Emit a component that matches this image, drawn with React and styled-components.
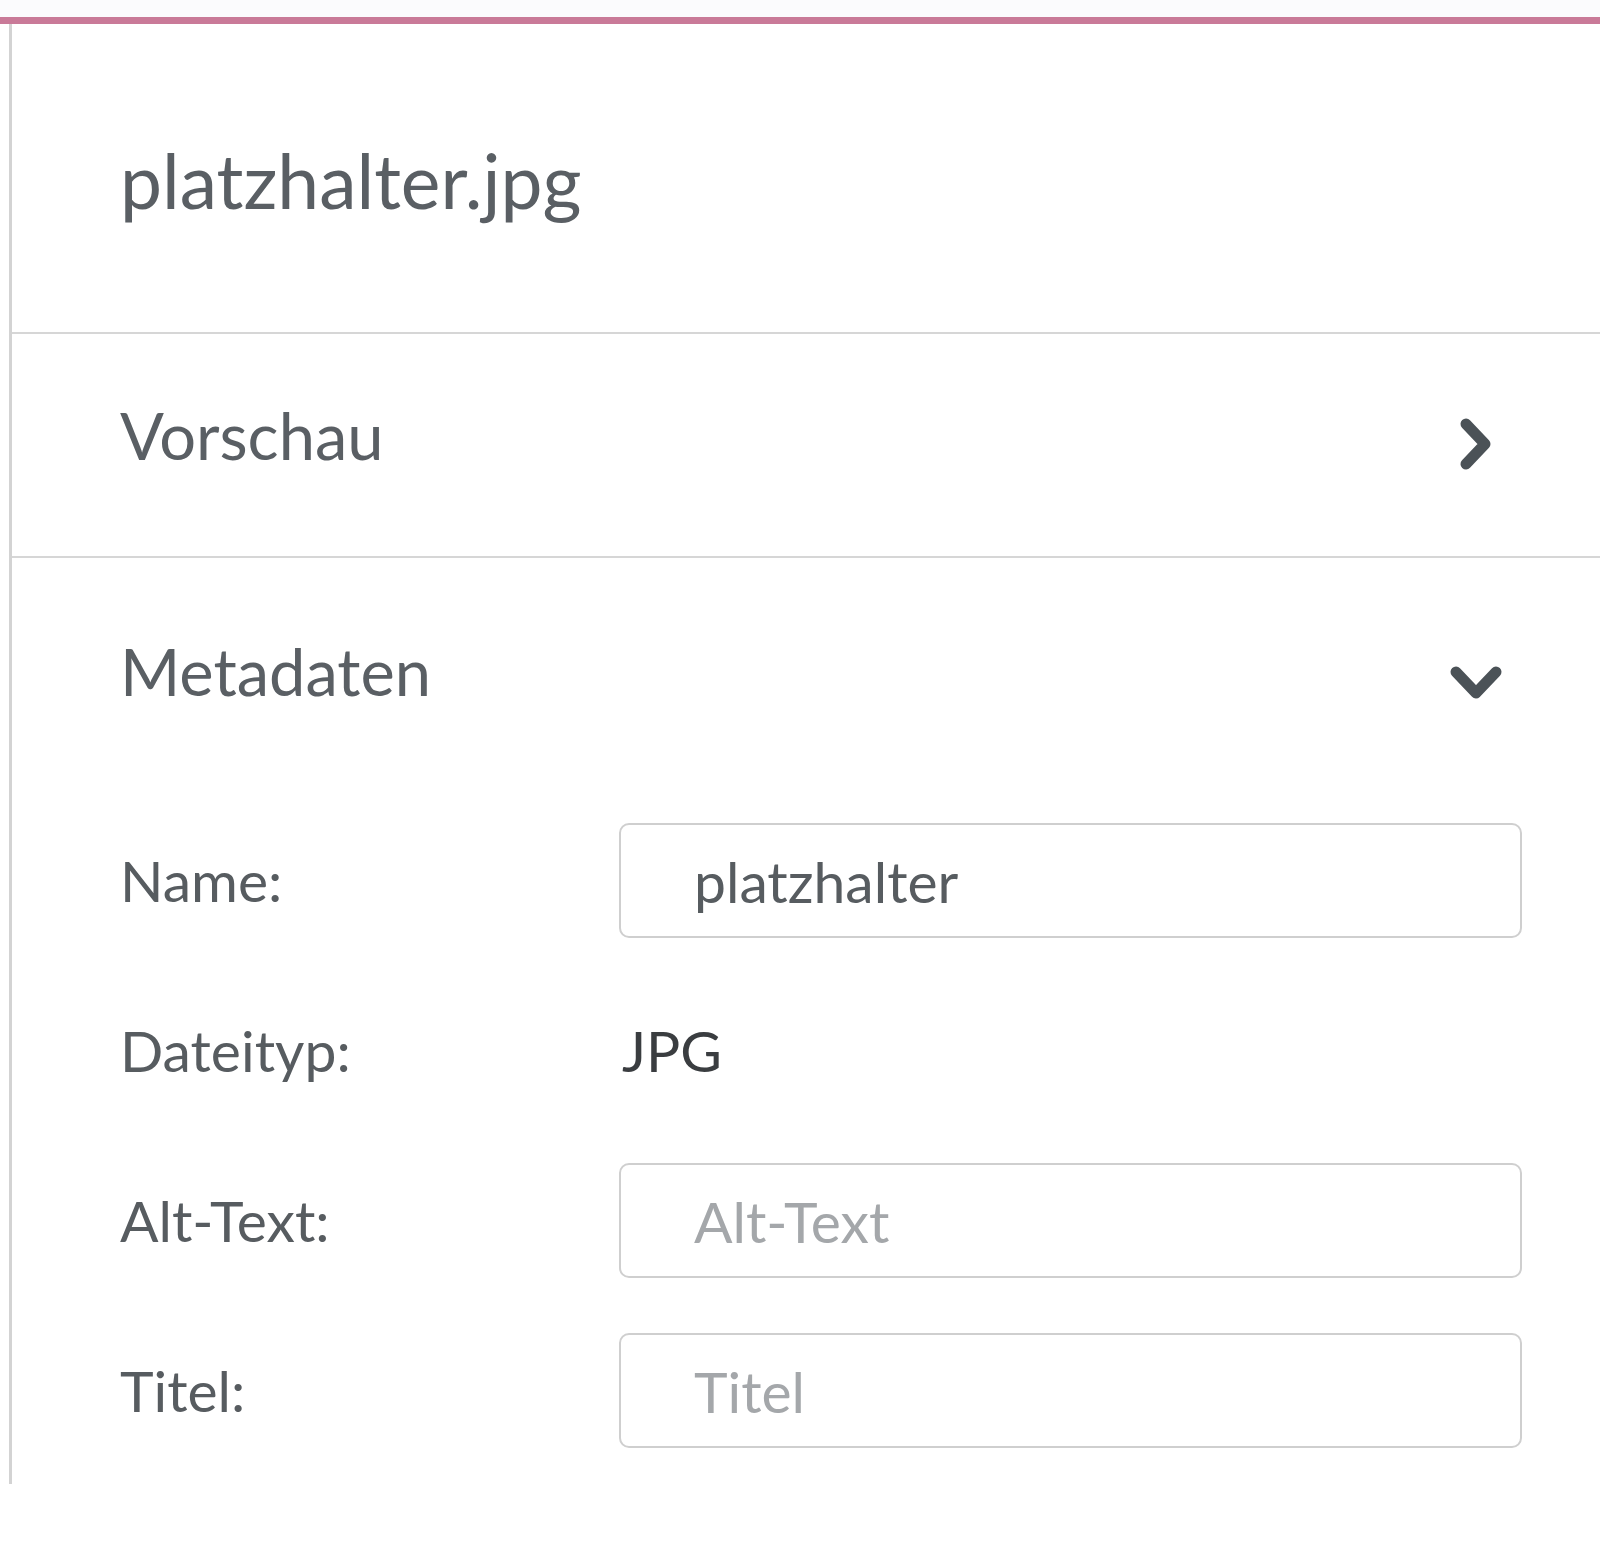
import styled, { createGlobalStyle } from 'styled-components';
import { useState } from 'react';

const GlobalStyle = createGlobalStyle`
  html, body {
    margin: 0;
    padding: 0;
    background: #fff;
  }
  body {
    font-family: Lato, "Noto Sans", sans-serif;
  }
`;

function ChevronRight() {
  return (
    <svg width="60" height="60" viewBox="0 0 60 60">
      <polyline points="20,10 39,30 20,50" fill="none" stroke="#4b5257" strokeWidth="11" strokeLinecap="round" strokeLinejoin="round" />
    </svg>
  );
}

function ChevronDown() {
  return (
    <svg width="60" height="60" viewBox="0 0 60 60">
      <polyline points="10,17 30,38 50,17" fill="none" stroke="#4b5257" strokeWidth="11" strokeLinecap="round" strokeLinejoin="round" />
    </svg>
  );
}

function App() {
  const [name, setName] = useState('platzhalter');
  const [altText, setAltText] = useState('');
  const [titel, setTitel] = useState('');
  const [previewOpen, setPreviewOpen] = useState(false);
  const [metaOpen, setMetaOpen] = useState(true);

  return (
    <>
      <GlobalStyle />
      <TopStrip />
      <Panel>
        <Header>
          <FileName>platzhalter.jpg</FileName>
        </Header>
        <Section>
          <SectionHead $height={222} $shift={20} onClick={() => setPreviewOpen(!previewOpen)}>
            <SectionTitle>Vorschau</SectionTitle>
            <Icon $offset={18}>{previewOpen ? <ChevronDown /> : <ChevronRight />}</Icon>
          </SectionHead>
        </Section>
        <Section $last>
          <SectionHead $height={230} $shift={4} onClick={() => setMetaOpen(!metaOpen)}>
            <SectionTitle>Metadaten</SectionTitle>
            <Icon $offset={28}>{metaOpen ? <ChevronDown /> : <ChevronRight />}</Icon>
          </SectionHead>
          {metaOpen && (
            <Fields>
              <Label>Name:</Label>
              <Input type="text" value={name} onChange={(e) => setName(e.target.value)} />
              <Label>Dateityp:</Label>
              <Value>JPG</Value>
              <Label>Alt-Text:</Label>
              <Input type="text" placeholder="Alt-Text" value={altText} onChange={(e) => setAltText(e.target.value)} />
              <Label>Titel:</Label>
              <Input type="text" placeholder="Titel" value={titel} onChange={(e) => setTitel(e.target.value)} />
            </Fields>
          )}
        </Section>
      </Panel>
    </>
  );
}

const TopStrip = styled.div`
  height: 17px;
  background: #fbfbfd;
  border-bottom: 7px solid #c97a98;
`;

const Panel = styled.div`
  margin-left: 9px;
  border-left: 3px solid #d3d3d3;
  padding-bottom: 36px;
`;

const Header = styled.div`
  height: 310px;
  display: flex;
  align-items: center;
  padding-left: 108px;
  box-sizing: border-box;
  border-bottom: 2px solid #d6d6d6;
`;

const FileName = styled.h1`
  margin: 0;
  font-weight: 400;
  font-size: 75px;
  color: #5a5f64;
  line-height: 1;
  padding-top: 4px;
`;

const Section = styled.div`
  border-bottom: ${(p) => (p.$last ? 'none' : '2px solid #d6d6d6')};
`;

const SectionHead = styled.div`
  height: ${(p) => p.$height}px;
  box-sizing: border-box;
  padding: 0 94px ${(p) => p.$shift}px 108px;
  display: flex;
  align-items: center;
  justify-content: space-between;
  cursor: pointer;
`;

const SectionTitle = styled.span`
  font-size: 65px;
  color: #5a5f64;
  line-height: 1;
`;

const Icon = styled.span`
  display: flex;
  width: 60px;
  height: 60px;
  margin-top: ${(p) => p.$offset}px;
`;

const Fields = styled.div`
  display: grid;
  grid-template-columns: 499px 903px;
  grid-auto-rows: 115px;
  row-gap: 55px;
  padding: 35px 0 0 108px;
  align-items: center;
`;

const Label = styled.label`
  font-size: 57px;
  color: #575c60;
  line-height: 1;
`;

const Value = styled.span`
  font-size: 57px;
  color: #3a3d40;
  line-height: 1;
  padding-left: 3px;
`;

const Input = styled.input`
  height: 115px;
  box-sizing: border-box;
  padding: 0 0 0 73px;
  border: 2px solid #cfcfcf;
  border-radius: 10px;
  font-family: Lato, "Noto Sans", sans-serif;
  font-size: 57px;
  color: #575c60;
  outline: none;
  &::placeholder {
    color: #a4a7aa;
  }
`;

export default App;
